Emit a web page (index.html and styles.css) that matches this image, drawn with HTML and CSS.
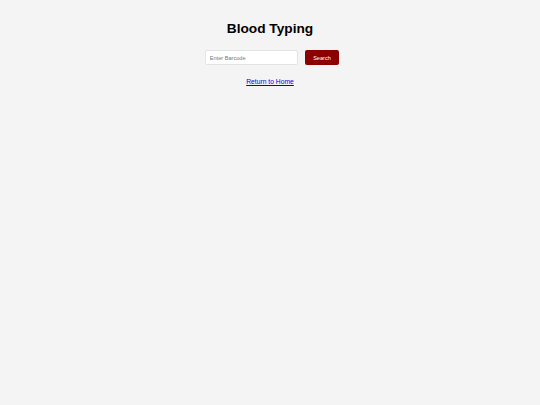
FILE: index.html
```html
<!DOCTYPE html>
<html>
<head>
<meta charset="utf-8">
<link rel="stylesheet" href="styles.css">
</head>
<body>
<div class="page">
  <h1 class="title">Blood Typing</h1>
  <form class="search" onsubmit="return false">
    <input class="barcode" type="text" placeholder="Enter Barcode">
    <button class="btn" type="submit">Search</button>
  </form>
  <a class="home" href="#">Return to Home</a>
</div>
</body>
</html>
```

FILE: styles.css
```css
html, body {
  margin: 0;
  padding: 0;
  background: #f4f4f4;
  height: 100%;
}
body {
  font-family: "Liberation Sans", Arial, sans-serif;
  color: #000;
}
.page {
  display: flex;
  flex-direction: column;
  align-items: center;
  padding-top: 21px;
}
.title {
  margin: 0;
  font-size: 13.7px;
  font-weight: bold;
  line-height: 15.5px;
}
.search {
  display: flex;
  gap: 7px;
  margin-top: 13.5px;
  padding-left: 4px;
}
.barcode {
  box-sizing: border-box;
  width: 93px;
  height: 15px;
  padding: 0 4px;
  font-family: "Liberation Sans", Arial, sans-serif;
  font-size: 5.6px;
  border: 1px solid #e4e4e4;
  border-radius: 2px;
  background: #fff;
  outline: none;
}
.barcode::placeholder {
  color: #777;
}
.btn {
  box-sizing: border-box;
  width: 34.5px;
  height: 15px;
  padding: 0;
  font-family: "Liberation Sans", Arial, sans-serif;
  font-size: 5.6px;
  color: #fff;
  background: #8b0000;
  border: none;
  border-radius: 2px;
}
.home {
  margin-top: 13px;
  font-size: 6.75px;
  line-height: 8px;
  color: #0000ee;
  text-decoration: underline;
}
```
